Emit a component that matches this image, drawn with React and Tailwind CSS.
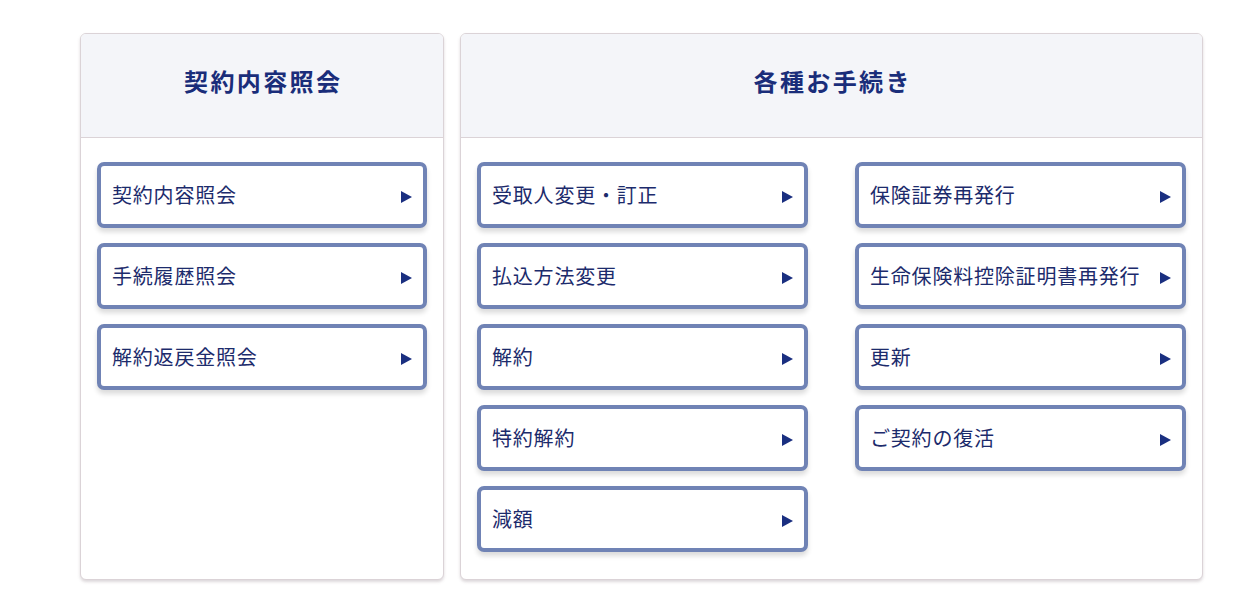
import React from 'react';

const FONT = { fontFamily: '"Noto Sans CJK JP", "Noto Sans", sans-serif' };

const inquiry = ['契約内容照会', '手続履歴照会', '解約返戻金照会'];
const procLeft = ['受取人変更・訂正', '払込方法変更', '解約', '特約解約', '減額'];
const procRight = ['保険証券再発行', '生命保険料控除証明書再発行', '更新', 'ご契約の復活'];

function Arrow() {
  return (
    <svg width="11" height="12" viewBox="0 0 11 12" className="shrink-0 mt-[3px]">
      <polygon points="0,0 11,6 0,12" fill="#1a2f80" />
    </svg>
  );
}

function MenuButton({ label }) {
  return (
    <button
      type="button"
      className="flex items-center justify-between h-[66px] w-full pl-[11px] pr-[11px] bg-white border-4 border-[#7083b5] rounded-[7px] shadow-[0_4px_5px_rgba(0,0,0,0.14)] text-left"
    >
      <span className="text-[20px] tracking-[0.04em] text-[#1c2b6c] whitespace-nowrap">{label}</span>
      <Arrow />
    </button>
  );
}

function Card({ title, className, children }) {
  return (
    <section className={`flex flex-col bg-white border border-[#dbd3d7] rounded-[6px] shadow-[0_2px_3px_rgba(120,100,110,0.25)] overflow-hidden ${className}`}>
      <header className="h-[104px] shrink-0 flex items-center justify-center pb-[9px] bg-[#f4f5f9] border-b border-[#dbd3d7]">
        <h2 className="text-[24px] font-bold tracking-[0.1em] text-[#1a2d7a] pl-[0.1em]">{title}</h2>
      </header>
      <div className="flex-1 px-4 pt-6 pb-6">{children}</div>
    </section>
  );
}

export default function App() {
  return (
    <div className="min-h-[613px] bg-white pt-[33px] pl-[80px]" style={FONT}>
      <div className="flex gap-[16px] items-stretch h-[547px]">
        <Card title="契約内容照会" className="w-[364px]">
          <div className="flex flex-col gap-[15px]">
            {inquiry.map((l) => <MenuButton key={l} label={l} />)}
          </div>
        </Card>
        <Card title="各種お手続き" className="w-[743px]">
          <div className="grid grid-cols-2 gap-x-[47px] items-start">
            <div className="flex flex-col gap-[15px]">
              {procLeft.map((l) => <MenuButton key={l} label={l} />)}
            </div>
            <div className="flex flex-col gap-[15px]">
              {procRight.map((l) => <MenuButton key={l} label={l} />)}
            </div>
          </div>
        </Card>
      </div>
    </div>
  );
}
